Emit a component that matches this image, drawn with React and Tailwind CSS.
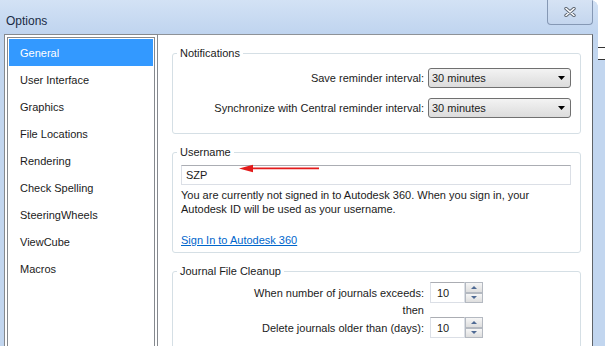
const pages = [
  "General",
  "User Interface",
  "Graphics",
  "File Locations",
  "Rendering",
  "Check Spelling",
  "SteeringWheels",
  "ViewCube",
  "Macros",
];

function Dropdown({ value }) {
  return (
    <div className="flex h-[20px] w-[143px] items-center justify-between rounded-[3px] border border-[#707070] bg-gradient-to-b from-[#f3f3f3] to-[#dcdcdc] pl-[3px] pr-[5px]">
      <span>{value}</span>
      <svg width="7" height="4" viewBox="0 0 7 4">
        <path d="M0 0h7L3.5 4z" fill="#000" />
      </svg>
    </div>
  );
}

function SpinArrow({ up }) {
  return (
    <div className="flex flex-1 items-center justify-center border border-[#b4b9c1] bg-gradient-to-b from-[#f6f6f6] to-[#dedede]">
      <svg width="6" height="3" viewBox="0 0 6 3">
        <path d={up ? "M0 3h6L3 0z" : "M0 0h6L3 3z"} fill="#4f6a94" />
      </svg>
    </div>
  );
}

function Spinner({ value }) {
  return (
    <div className="flex h-[21px] w-[53px]">
      <div className="flex flex-1 items-center border border-[#dbdfe6] border-t-[#abadb3] pl-[6px]">
        {value}
      </div>
      <div className="flex w-[18px] flex-col">
        <SpinArrow up />
        <SpinArrow />
      </div>
    </div>
  );
}

function Group({ title, className = "", children }) {
  return (
    <fieldset className={`relative shrink-0 rounded-[3px] border border-[#d5dfe5] ${className}`}>
      <legend className="ml-[4px] px-[3px]">{title}</legend>
      {children}
    </fieldset>
  );
}

export default function App() {
  return (
    <div
      className="flex h-[346px] w-[605px] overflow-hidden bg-white text-[11px] leading-[14px] text-[#1b1b1b]"
      style={{ fontFamily: '"Liberation Sans", Arial, sans-serif' }}
    >
      {/* dialog window */}
      <div className="flex w-[598px] flex-col overflow-hidden rounded-tr-[8px] bg-[#c2d6ef]">
        <div className="flex h-[34px] shrink-0 items-start justify-between bg-gradient-to-b from-[#d3e2f5] to-[#bfd4ef] pl-[6px] pr-[5px]">
          <span className="mt-[14px] text-[12px] text-[#1a2b45]">Options</span>
          <div className="flex h-[25px] w-[46px] items-center justify-center rounded-b-[4px] border border-t-0 border-[#8598b4] bg-gradient-to-b from-[#d6e3f4] to-[#c4d6ee]">
            <svg width="12" height="10" viewBox="0 0 12 10">
              <path d="M2 1.5l8 7M10 1.5l-8 7" stroke="#5b6470" strokeWidth="3.4" strokeLinecap="round" />
              <path d="M2 1.5l8 7M10 1.5l-8 7" stroke="#fff" strokeWidth="1.6" strokeLinecap="round" />
            </svg>
          </div>
        </div>

        <div className="flex min-h-0 flex-1 pl-[4px] pr-[5px]">
          {/* page list */}
          <div className="w-[154px] border-[4px] border-b-0 border-double border-[#85898e] bg-white p-[1px]">
            {pages.map((p, i) => (
              <div
                key={p}
                className={`flex h-[27px] items-center pl-[11px] ${
                  i === 0 ? "bg-[#3399ff] text-white" : ""
                }`}
              >
                {p}
              </div>
            ))}
          </div>

          {/* settings */}
          <div className="flex min-h-0 flex-1 flex-col overflow-hidden border-t border-r border-t-[#8e9297] border-r-[#5f6368] bg-white pl-[14px] pr-[11px]">
            <Group title="Notifications" className="mt-[11px] pb-[15px]">
              <div className="mt-[8px] flex flex-col gap-[10px] pr-[9px]">
                <div className="flex items-center justify-end gap-[4px]">
                  <span>Save reminder interval:</span>
                  <Dropdown value="30 minutes" />
                </div>
                <div className="flex items-center justify-end gap-[4px]">
                  <span>Synchronize with Central reminder interval:</span>
                  <Dropdown value="30 minutes" />
                </div>
              </div>
            </Group>

            <Group title="Username" className="mt-[11px] pb-[5px]">
              <svg
                className="absolute left-[66px] top-[5px]"
                width="82"
                height="9"
                viewBox="0 0 82 9"
              >
                <path d="M0 4.5L14 0.8V8.2z" fill="#e31b1b" />
                <path d="M12 3.5H80L80 5.3H12z" fill="#e31b1b" />
              </svg>
              <div className="pl-[8px] pr-[9px]">
                <div className="mt-[6px] flex h-[20px] items-center border border-[#dbdfe6] border-t-[#abadb3] pl-[4px]">
                  SZP
                </div>
                <p className="mt-[3px]">
                  You are currently not signed in to Autodesk 360. When you sign in, your
                  <br />
                  Autodesk ID will be used as your username.
                </p>
                <a className="mt-[17px] block w-fit text-[#0066cc] underline">Sign In to Autodesk 360</a>
              </div>
            </Group>

            <Group title="Journal File Cleanup" className="mt-[11px] pb-[20px]">
              <div className="mt-[4px] flex items-center">
                <span className="w-[251px] text-right">When number of journals exceeds:</span>
                <div className="ml-[6px]">
                  <Spinner value="10" />
                </div>
              </div>
              <div className="flex h-[14px] items-center">
                <span className="w-[251px] text-right">then</span>
              </div>
              <div className="flex items-center">
                <span className="w-[251px] text-right">Delete journals older than (days):</span>
                <div className="ml-[6px]">
                  <Spinner value="10" />
                </div>
              </div>
            </Group>
          </div>
        </div>
      </div>

      {/* window behind */}
      <div className="flex w-[7px] flex-col">
        <div className="h-[47px]" />
        <div className="h-px bg-[#333]" />
        <div className="h-[11px]" />
        <div className="h-px bg-[#333]" />
        <div className="flex-1 bg-[#c2d6ef]" />
      </div>
    </div>
  );
}
